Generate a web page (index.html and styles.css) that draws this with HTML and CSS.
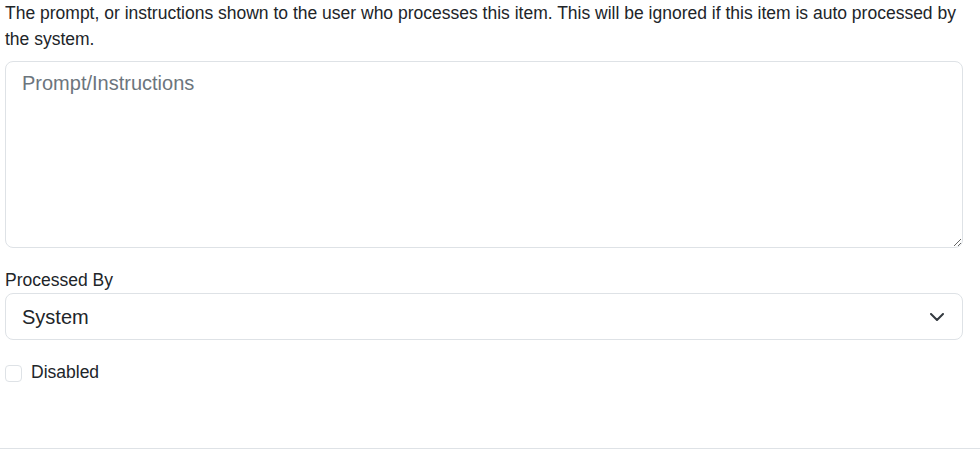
FILE: index.html
```html
<!DOCTYPE html>
<html lang="en">
<head>
<meta charset="utf-8">
<title>Item form</title>
<link rel="stylesheet" href="styles.css">
</head>
<body>
<div class="modal-body">
  <p class="help-text">The prompt, or instructions shown to the user who processes this item. This will be ignored if this item is auto processed by the system.</p>
  <textarea class="prompt-input" placeholder="Prompt/Instructions"></textarea>
  <div class="field">
    <label class="field-label">Processed By</label>
    <div class="select-box">
      <span class="select-value">System</span>
      <svg class="chevron" width="14" height="8" viewBox="0 0 14 8" aria-hidden="true">
        <polyline points="1,1 7,7 13,1" fill="none" stroke="#343a40" stroke-width="2" stroke-linecap="round" stroke-linejoin="round"/>
      </svg>
    </div>
  </div>
  <div class="check-row">
    <span class="check-box"></span>
    <span class="check-label">Disabled</span>
  </div>
</div>
<div class="modal-footer"></div>
</body>
</html>
```
FILE: styles.css
```css
html, body {
  margin: 0;
  padding: 0;
  background: #ffffff;
}

body {
  font-family: "Liberation Sans", Arial, sans-serif;
  font-size: 17.5px;
  line-height: 26px;
  color: #212529;
  width: 980px;
  height: 454px;
  overflow: hidden;
}

.modal-body {
  padding: 0 17px 0 5px;
  height: 448px;
  box-sizing: border-box;
}

.help-text {
  margin: 0 0 9px 0;
}

.prompt-input {
  display: block;
  width: 100%;
  height: 187px;
  box-sizing: border-box;
  margin: 0 0 19px 0;
  padding: 6px 16px;
  border: 1px solid #dee2e6;
  border-radius: 8px;
  font-family: "Liberation Sans", Arial, sans-serif;
  font-size: 20px;
  line-height: 30px;
  color: #212529;
  background: #fff;
  outline: none;
}

.prompt-input::placeholder {
  color: #6c757d;
  opacity: 1;
}

.field {
  display: flex;
  flex-direction: column;
  margin-bottom: 19px;
}

.field-label {
  display: block;
  line-height: 26px;
}

.select-box {
  display: flex;
  align-items: center;
  justify-content: space-between;
  height: 47px;
  box-sizing: border-box;
  padding: 0 18px 0 16px;
  border: 1px solid #dee2e6;
  border-radius: 8px;
  font-size: 20px;
  line-height: 29px;
  color: #212529;
}

.select-value {
  padding-top: 1px;
}

.chevron {
  display: block;
  flex: none;
}

.check-row {
  display: flex;
  align-items: flex-start;
  gap: 9px;
  line-height: 26px;
}

.check-box {
  flex: none;
  width: 17px;
  height: 17px;
  box-sizing: border-box;
  margin-top: 6px;
  border: 1px solid #dee2e6;
  border-radius: 4px;
  background: #fff;
}

.modal-footer {
  border-top: 1px solid #dee2e6;
  height: 6px;
}
```
